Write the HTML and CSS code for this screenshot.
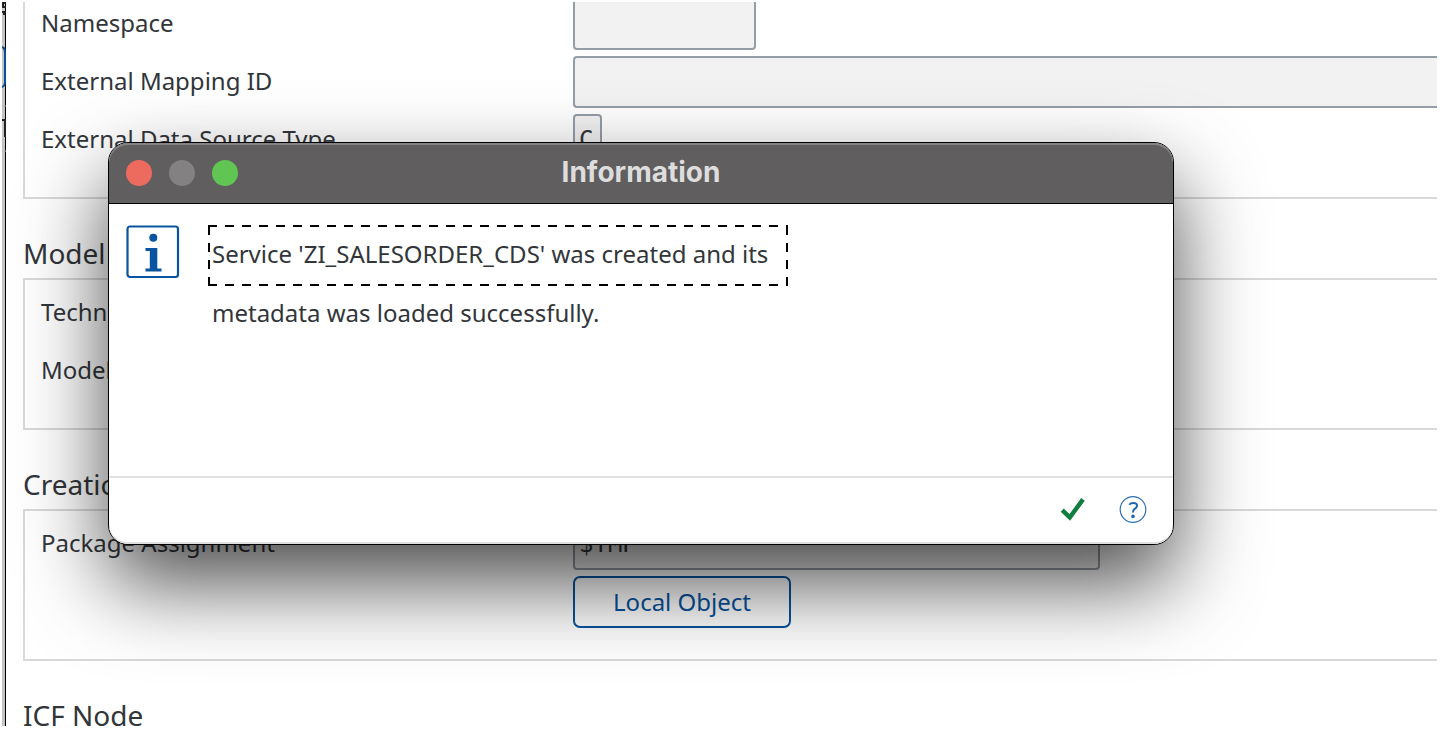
FILE: index.html
```
<!DOCTYPE html>
<html lang="en">
<head>
<meta charset="utf-8">
<title>Information</title>
<link rel="stylesheet" href="styles.css">
</head>
<body>
<div class="screen">
  <div class="edge" aria-hidden="true">
    <svg class="edge-marks" width="4" height="160" viewBox="0 0 4 160">
      <path d="M4 1H1V5H4M0 10H4M1 12H3" fill="none" stroke="#222" stroke-width="2"/>
      <path d="M0 45Q3 46 3 50V80Q3 84 0 85" fill="none" stroke="#0a4f9c" stroke-width="2"/>
      <path d="M0 104H4M0 149H4" stroke="#b0b0b0" stroke-width="1"/>
      <path d="M0 118H4M3 118V135" fill="none" stroke="#222" stroke-width="2"/>
    </svg>
  </div>
  <main class="form">
    <section class="group group-open">
      <div class="row">
        <label class="label" for="namespace">Namespace</label>
        <input class="field field-short" id="namespace" type="text" readonly>
      </div>
      <div class="row">
        <label class="label" for="mapping">External Mapping ID</label>
        <input class="field field-wide" id="mapping" type="text" readonly>
      </div>
      <div class="row">
        <label class="label" for="source">External Data Source Type</label>
        <input class="field field-char" id="source" type="text" value="C" readonly>
      </div>
    </section>
    <h2 class="heading">Model</h2>
    <section class="group">
      <div class="row"><span class="label">Techn</span></div>
      <div class="row"><span class="label">Model</span></div>
    </section>
    <h2 class="heading">Creation</h2>
    <section class="group">
      <div class="row">
        <label class="label" for="package">Package Assignment</label>
        <input class="field field-medium" id="package" type="text" value="$TMP" readonly>
      </div>
      <div class="row">
        <span class="label"></span>
        <button class="local" type="button">Local Object</button>
      </div>
    </section>
    <h2 class="heading">ICF Node</h2>
  </main>
  <div class="dialog" role="dialog" aria-labelledby="dialog-title">
    <header class="titlebar">
      <div class="lights">
        <button class="light light-close" type="button" aria-label="Close"></button>
        <button class="light light-min" type="button" aria-label="Minimize" disabled></button>
        <button class="light light-zoom" type="button" aria-label="Zoom"></button>
      </div>
      <h1 class="title" id="dialog-title">Information</h1>
    </header>
    <div class="body">
      <svg class="info" width="54" height="54" viewBox="0 0 54 54" aria-hidden="true">
        <rect x="1.5" y="1.5" width="50.5" height="50.5" rx="2.5" fill="#fff" stroke="#0854a0" stroke-width="2.2"/>
        <circle cx="27.3" cy="12.7" r="4" fill="#0854a0"/>
        <path d="M19.5 23H31.3V43.5H35.5V46.5H19.5V43.5H23.8V26H19.5Z" fill="#0854a0"/>
      </svg>
      <div class="message">
        <p class="line line-focus">Service 'ZI_SALESORDER_CDS' was created and its</p>
        <p class="line">metadata was loaded successfully.</p>
      </div>
    </div>
    <footer class="footer">
      <button class="icon" type="button" aria-label="Continue">
        <svg width="28" height="28" viewBox="0 0 28 28"><path d="M3.2 14.2L10.8 21.4L24 3.4" fill="none" stroke="#107e3e" stroke-width="4.4"/></svg>
      </button>
      <button class="icon" type="button" aria-label="Help">
        <svg width="28" height="28" viewBox="0 0 28 28"><circle cx="14" cy="13.5" r="12.8" fill="#fff" stroke="#2f70b5" stroke-width="1.2"/><path d="M10.3 8.8Q11.5 7 14.3 7Q18.3 7 18 9.8Q17.8 11.8 15.7 12.9Q14 13.9 14 16.6" fill="none" stroke="#2167ac" stroke-width="2"/><circle cx="14" cy="20.4" r="1.8" fill="#2167ac"/></svg>
      </button>
    </footer>
  </div>
</div>
</body>
</html>
```
FILE: styles.css
```
* { box-sizing: border-box; }

body {
  margin: 0;
  background: #fff;
  color: #32363a;
  font: 24px/50px "Noto Sans", "Open Sans", sans-serif;
}

button, input { font: inherit; color: inherit; margin: 0; }
h1, h2, p { margin: 0; font-weight: 400; }

.screen {
  position: relative;
  display: flex;
  height: calc(100vh - 16px);
  margin: 2px 9px 14px 2px;
  overflow: hidden;
}

.edge {
  flex: none;
  width: 4px;
  background: #c4c4c4;
  border-right: 1px solid #000;
}
.edge-marks { display: block; }

.form {
  flex: 1;
  min-width: 0;
  margin-top: -4px;
  padding-left: 17px;
}

.group {
  display: flex;
  flex-direction: column;
  gap: 6px;
  padding: 7px 0 31px 16px;
  border: 2px solid #d9d9d9;
  border-right: 0;
}
.group-open { border-top: 0; padding-top: 0; }

.row { display: flex; height: 52px; }
.label { flex: none; width: 532px; white-space: nowrap; }

.field {
  height: 52px;
  padding: 0 4px;
  border: 2px solid #959da6;
  border-radius: 4px;
  background: #f2f2f2;
  font-family: "DejaVu Sans Mono", monospace;
  font-size: 24px;
}
.field-short { width: 183px; }
.field-medium { width: 527px; }
.field-char { width: 29px; }
.field-wide {
  flex: 1;
  min-width: 0;
  border-right: 0;
  border-radius: 4px 0 0 4px;
}

.heading {
  padding-top: 29px;
  font-size: 28px;
  line-height: 50px;
}

.local {
  width: 218px;
  padding: 0;
  border: 2px solid #0854a0;
  border-radius: 7px;
  background: #fff;
  color: #0854a0;
  line-height: 48px;
}

.dialog {
  position: absolute;
  top: 140px;
  left: 106px;
  right: 263px;
  border: 1px solid #000;
  border-radius: 20px;
  background: #fff;
  box-shadow: 0 38px 84px rgba(0, 0, 0, .7);
}

.titlebar {
  position: relative;
  display: flex;
  align-items: center;
  justify-content: center;
  height: 61px;
  border-bottom: 1px solid #000;
  border-radius: 19px 19px 0 0;
  background: #605e5f;
  box-shadow: inset 0 2px 0 #858384;
}
.lights {
  position: absolute;
  left: 17px;
  display: flex;
  gap: 17px;
}
.light {
  width: 26px;
  height: 26px;
  padding: 0;
  border: 0;
  border-radius: 50%;
}
.light-close { background: #ed6a5e; }
.light-min { background: #838182; }
.light-zoom { background: #61c554; }
.title {
  padding-bottom: 2px;
  color: #dedddd;
  font: 700 28px/56px Inter, sans-serif;
}

.body {
  display: flex;
  align-items: flex-start;
  gap: 28px;
  min-height: 274px;
  padding: 21px 17px;
  border-bottom: 2px solid #e0e0e0;
}
.info { flex: none; }
.message { display: grid; justify-items: start; }
.line { padding: 0 4px; line-height: 54px; }
.line-focus {
  padding: 0 20px 3px 4px;
  line-height: 58px;
  background:
    repeating-linear-gradient(90deg, #000 0 9px, transparent 9px 17px) top / 100% 2px no-repeat,
    repeating-linear-gradient(90deg, #000 0 9px, transparent 9px 17px) bottom / 100% 2px no-repeat,
    repeating-linear-gradient(0deg, #000 0 9px, transparent 9px 17px) left / 2px 100% no-repeat,
    repeating-linear-gradient(0deg, #000 0 9px, transparent 9px 17px) right / 2px 100% no-repeat;
}

.footer {
  display: flex;
  align-items: center;
  justify-content: flex-end;
  gap: 32px;
  height: 66px;
  padding-right: 26px;
  border-bottom: 2px solid #e0e0e0;
  border-radius: 0 0 19px 19px;
}
.icon {
  display: flex;
  padding: 0;
  border: 0;
  background: none;
}
```
